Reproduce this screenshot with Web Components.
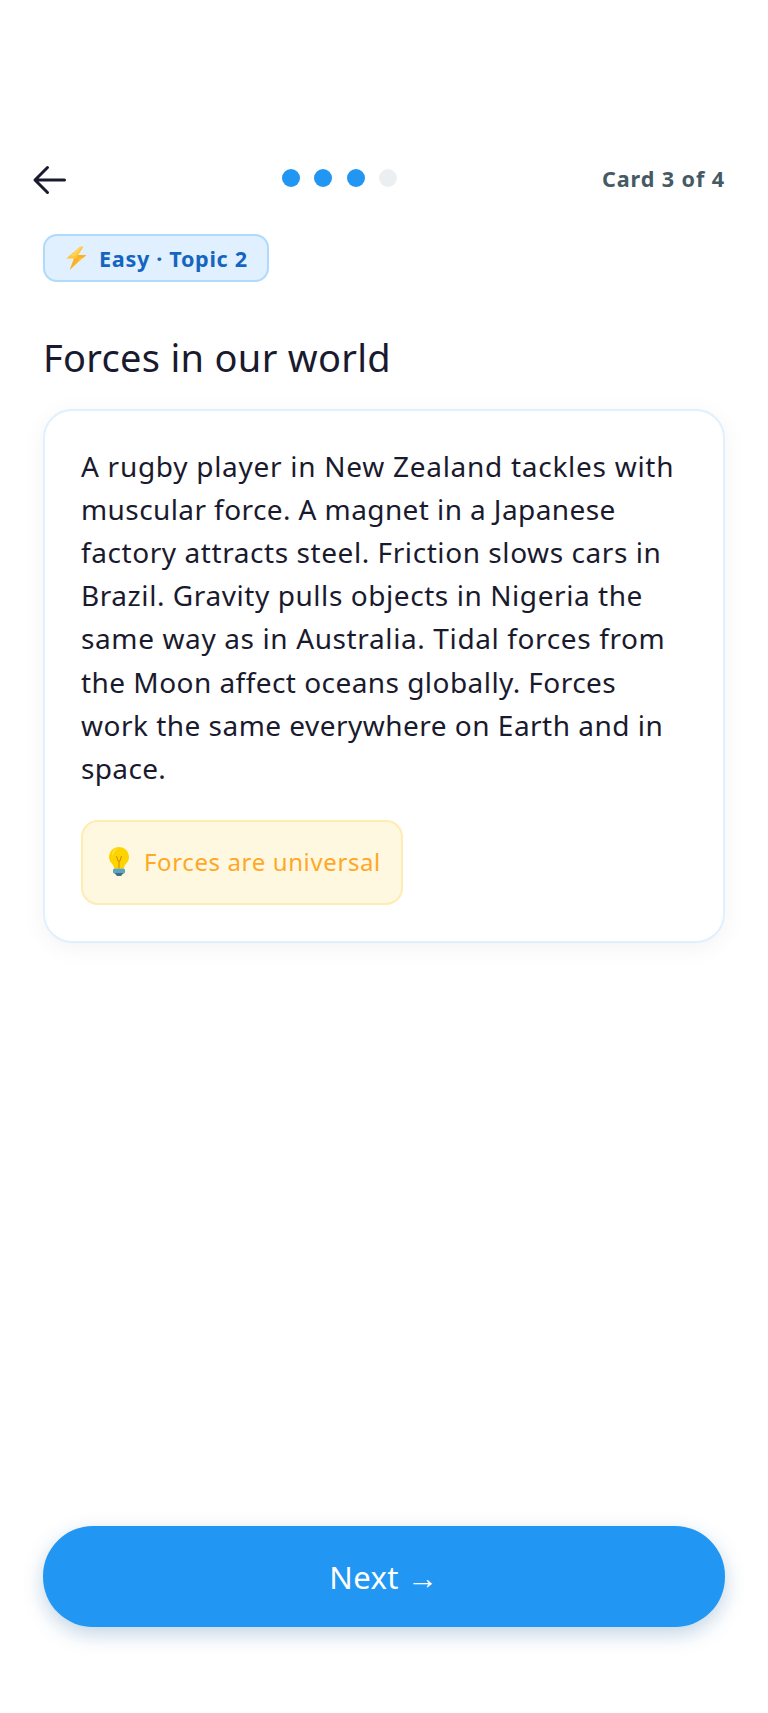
<!DOCTYPE html>
<html lang="en"><head><meta charset="utf-8"><title>Forces in our world</title>
<style>
html,body{margin:0;padding:0;background:#fff}
body{width:768px;height:1713px;overflow:hidden;font-family:"Noto Sans","Liberation Sans",sans-serif;color:#1a1a2e}
</style></head><body>
<lesson-screen>
  <lesson-top slot="top" current="3" total="4"></lesson-top>
  <level-badge slot="badge">Easy · Topic 2</level-badge>
  <h-title slot="title">Forces in our world</h-title>
  <lesson-card slot="card">
    <span style="letter-spacing:.72px">A rugby player in New Zealand tackles with</span><br><span style="letter-spacing:.41px">muscular force. A magnet in a Japanese</span><br><span style="letter-spacing:.57px">factory attracts steel. Friction slows cars in</span><br><span style="letter-spacing:.57px">Brazil. Gravity pulls objects in Nigeria the</span><br><span style="letter-spacing:.62px">same way as in Australia. Tidal forces from</span><br><span style="letter-spacing:.45px">the Moon affect oceans globally. Forces</span><br><span style="letter-spacing:.48px">work the same everywhere on Earth and in</span><br><span style="letter-spacing:.35px">space.</span>
    <tip-box slot="tip">Forces are universal</tip-box>
  </lesson-card>
  <next-button slot="action">Next →</next-button>
</lesson-screen>
<script>
function def(name,html){customElements.define(name,class extends HTMLElement{constructor(){super();this.attachShadow({mode:'open'}).innerHTML=html;}})}
def('lesson-screen',`<style>:host{display:flex;flex-direction:column;box-sizing:border-box;height:1713px;padding:156px 43px 86px 43px}
.sp{flex:1}
::slotted([slot=badge]){margin-top:30px}
::slotted([slot=title]){margin-top:51px}
::slotted([slot=card]){margin-top:28px}
</style><slot name="top"></slot><slot name="badge"></slot><slot name="title"></slot><slot name="card"></slot><div class="sp"></div><slot name="action"></slot>`);
def('lesson-top',`<style>:host{display:flex;align-items:center;justify-content:space-between;height:48px}
button{all:unset;display:flex;margin-left:-13px;width:48px;height:48px;align-items:center;justify-content:center}
.dots{display:flex;gap:14.4px;margin-left:-1px;margin-top:-4px}
.dots i{width:18px;height:18px;border-radius:50%;background:#2196f3;display:block}
.dots i.off{background:#eceff1}
.c{font:700 21.6px "Noto Sans",sans-serif;color:#455a64;letter-spacing:.9px;margin-top:-4px}
</style><button aria-label="Back"><svg width="48" height="48" viewBox="0 0 48 48" fill="none" stroke="#1a1a2e" stroke-width="3" stroke-linecap="round" stroke-linejoin="round"><path d="M5 24H34.500M17.500 11.500 5 24 17.500 36.500"/></svg></button><div class="dots"><i></i><i></i><i></i><i class="off"></i></div><span class="c">Card 3 of 4</span>`);
def('level-badge',`<style>:host{display:flex;align-self:flex-start;align-items:center;gap:10px;box-sizing:border-box;height:48px;padding:0 19px 0 20px;background:#e0f0fe;border:2px solid #b0dafc;border-radius:14px;font:700 21.6px "Noto Sans",sans-serif;color:#1565c0;letter-spacing:.68px}
svg{display:block}</style><svg width="24" height="24" viewBox="0 0 24 24"><path d="M15 .7 1.300 12.500H9L4.700 24 21.300 9H13L18.500.7z" fill="#ffc52e"/><path d="M9 12.500 4.700 24 15 12.500 9 12.500zM13 9h8.300l-3 2.700H12z" fill="#fb9f2a" opacity=".6"/><path d="M15 .7 5 10.500l5-.2L17 .7z" fill="#ffe082" opacity=".55"/></svg><span><slot></slot></span>`);
def('h-title',`<style>:host{display:block;font:400 38px/48px "Noto Sans",sans-serif;color:#1a1a2e;letter-spacing:.3px}</style><slot></slot>`);
def('lesson-card',`<style>:host{display:block;box-sizing:border-box;background:#fff;border:2px solid #e0f0fe;border-radius:29px;padding:33.500px 36px 36px 36px;box-shadow:0 5px 24px rgba(0,0,0,.05)}
.t{font:400 28px/43.2px "Noto Sans",sans-serif;color:#1a1a2e;white-space:nowrap}
::slotted(tip-box){margin-top:30.300px}
</style><div class="t"><slot></slot></div><slot name="tip"></slot>`);
def('tip-box',`<style>:host{display:flex;width:max-content;align-items:center;gap:15px;box-sizing:border-box;height:85px;padding:0 20px 2px 26px;background:#fff8e1;border:2px solid #ffecb0;border-radius:17px;font:400 24px "Noto Sans",sans-serif;color:#ffa726;letter-spacing:.62px;white-space:nowrap}
svg{display:block}</style><svg width="20" height="29" viewBox="0 0 20 29"><path d="M10 0a10 10 0 0 0-6.500 17.500c1.200 1.200 1.500 2.500 1.500 4h10c0-1.500.3-2.800 1.500-4A10 10 0 0 0 10 0z" fill="#fdd400"/><path d="M3.500 6a8 8 0 0 1 5.500-4.500A8 8 0 0 0 4 10z" fill="#fff3a0"/><path d="M7.500 9 9 14h2l1.500-5M10 14v7.500" stroke="#d08a00" fill="none"/><rect x="4" y="21.500" width="12" height="5" rx="1.500" fill="#5fa3bd"/><path d="M5.500 26h9L12 29H8z" fill="#3f6f86"/></svg><span><slot></slot></span>`);
def('next-button',`<style>:host{display:block}
button{all:unset;box-sizing:border-box;display:flex;align-items:center;justify-content:center;width:100%;height:101px;padding-top:1px;background:#2196f3;border-radius:50px;color:#fff;font:400 31px "Noto Sans",sans-serif;letter-spacing:.4px;box-shadow:0 7px 20px rgba(33,100,160,.28)}</style><button><slot></slot></button>`);
</script></body></html>
